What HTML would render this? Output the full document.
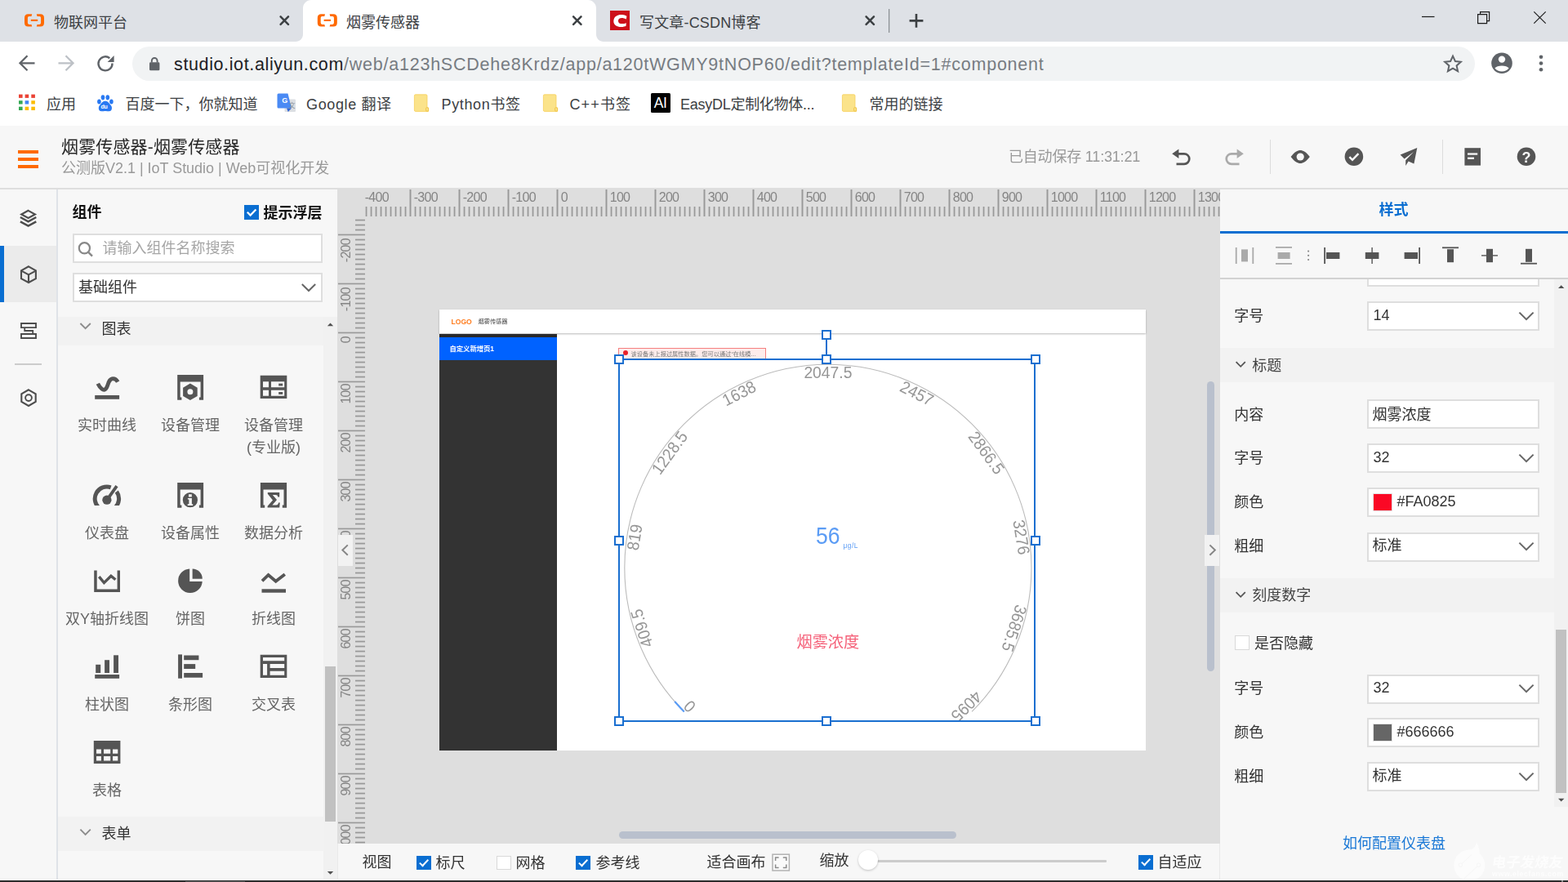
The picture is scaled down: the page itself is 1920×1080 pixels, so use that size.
<!DOCTYPE html>
<html lang="zh-CN">
<head>
<meta charset="utf-8">
<title>烟雾传感器</title>
<style>
html,body{margin:0;padding:0}
body{width:1920px;height:1080px;overflow:hidden;position:relative;background:#f7f7f7;color:#333;
  font-family:"Liberation Sans","Noto Sans CJK SC",sans-serif;font-size:18px}
.a{position:absolute;box-sizing:border-box}
.t{position:absolute;white-space:nowrap;line-height:24px;height:24px}
svg{position:absolute;overflow:visible}
.ct{color:#3c4043;font-size:18px}
.bm{color:#3c4043;font-size:18px;top:116px}
.fold{width:18px;height:22px;top:115px}
.lb{position:absolute;width:102px;text-align:center;font-size:18px;line-height:27px;color:#666;white-space:nowrap}
.rl{font-size:16px;color:#858585;line-height:16px;height:16px;letter-spacing:-0.7px}
.rv{transform-origin:0 0;transform:rotate(-90deg) translate(-100%,0)}
.gl{font-size:20.5px;fill:#969696;font-family:"Liberation Sans",sans-serif}
.hd{position:absolute;box-sizing:border-box;width:12px;height:12px;background:#fff;border:2px solid #1a6fd0}
.cb{position:absolute;box-sizing:border-box;width:17.8px;height:17.8px;background:#fff;border:1.5px solid #d9d9d9}
.cb.on{background:#0a6ed1;border:none}
.cb.on::after{content:"";position:absolute;left:5.9px;top:2.4px;width:4.4px;height:9.2px;border:solid #fff;border-width:0 2.2px 2.2px 0;transform:rotate(43deg)}
.bb{font-size:18px;color:#333}
.rlb{font-size:18px;color:#333}
.inp{position:absolute;box-sizing:border-box;left:1674px;width:211px;height:36px;background:#fff;border:2px solid #dedede}
.rv2{font-size:18px;color:#333;left:1681.6px}
.chv{left:1859px;width:20px;height:14px}
.mt{background:linear-gradient(90deg,#bdbdbd 0,#bdbdbd 1px,#999 1px,#999 2px,#bdbdbd 2px)}
.ml{background:linear-gradient(180deg,#c4c4c4 0,#c4c4c4 1px,#999 1px,#999 2px,#c9c9c9 2px)}
/*CSS-MORE*/
</style>
</head>
<body>
<!-- ================= BROWSER CHROME ================= -->
<div class="a" style="left:0;top:0;width:1920px;height:51px;background:#dee1e6"></div>
<div class="a" style="left:0;top:51px;width:1920px;height:103px;background:#fff"></div>
<!-- active tab shape -->
<svg style="left:0;top:0" width="1920" height="51" viewBox="0 0 1920 51">
  <path d="M362 51 C367 51 371 47 371 42 L371 10 C371 4.5 375.5 0 381 0 L720 0 C725.5 0 730 4.5 730 10 L730 42 C730 47 734 51 739 51 Z" fill="#fff"/>
  <!-- tab favicons -->
  <g fill="#ff6a00" transform="translate(0 0)"><path d="M39.2 17.3 H34.6 Q30 17.3 30 21.9 V27.9 Q30 32.5 34.6 32.5 H39.2 L38.5 29.9 H35.7 Q33.9 29.9 33.9 28.1 V21.7 Q33.9 19.9 35.7 19.9 H38.5 Z"/><path d="M44.8 17.3 H49.4 Q54 17.3 54 21.9 V27.9 Q54 32.5 49.4 32.5 H44.8 L45.5 29.9 H48.3 Q50.1 29.9 50.1 28.1 V21.7 Q50.1 19.9 48.3 19.9 H45.5 Z"/><rect x="37.8" y="23.8" width="8.4" height="2.1"/></g>
  <g fill="#ff6a00" transform="translate(358.8 0)"><path d="M39.2 17.3 H34.6 Q30 17.3 30 21.9 V27.9 Q30 32.5 34.6 32.5 H39.2 L38.5 29.9 H35.7 Q33.9 29.9 33.9 28.1 V21.7 Q33.9 19.9 35.7 19.9 H38.5 Z"/><path d="M44.8 17.3 H49.4 Q54 17.3 54 21.9 V27.9 Q54 32.5 49.4 32.5 H44.8 L45.5 29.9 H48.3 Q50.1 29.9 50.1 28.1 V21.7 Q50.1 19.9 48.3 19.9 H45.5 Z"/><rect x="37.8" y="23.8" width="8.4" height="2.1"/></g>
  <!-- close x -->
  <g stroke="#3c4043" stroke-width="2.5" fill="none" stroke-linecap="round">
    <path d="M343.6 20.4 L353 29.8 M353 20.4 L343.6 29.8"/>
    <path d="M702.1 20.4 L711.5 29.8 M711.5 20.4 L702.1 29.8"/>
    <path d="M1060.6 20.4 L1070 29.8 M1070 20.4 L1060.6 29.8"/>
    <path d="M1113.6 25.4 H1130.4 M1122 17 V33.8" stroke-width="2.6" stroke-linecap="butt"/>
  </g>
  <rect x="1088" y="11" width="1.3" height="29" fill="#8d9196"/>
  <!-- csdn -->
  <rect x="747" y="13" width="24" height="24" fill="#cd1019"/>
  <path d="M767.4 19.8 C762 16.6 752.4 17.2 751.4 25 C750.6 32.2 758.8 34.6 766.4 32 L766.8 28.2 C762 29.8 756.6 29.4 757 25.2 C757.4 21.2 762.4 21.2 766.8 23.4 Z" fill="#fff"/>
  <!-- window controls -->
  <g stroke="#1b1b1b" stroke-width="1.2" fill="none">
    <path d="M1741 20.5 H1756.5"/>
    <path d="M1809.6 17.6 H1820.6 V28.6 H1809.6 Z M1812.6 17.4 V14.6 H1823.6 V25.6 H1820.8"/>
    <path d="M1878.3 14.3 L1892.7 28.7 M1892.7 14.3 L1878.3 28.7"/>
  </g>
</svg>
<span class="t ct" style="left:66px;top:15.5px">物联网平台</span>
<span class="t ct" style="left:424px;top:15.5px">烟雾传感器</span>
<span class="t ct" style="letter-spacing:0.167px;left:783px;top:15.5px">写文章-CSDN博客</span>

<!-- toolbar -->
<div class="a" style="left:162px;top:57px;width:1644px;height:42px;border-radius:21px;background:#f1f3f4"></div>
<svg style="left:0;top:51px" width="1920" height="54" viewBox="0 51 1920 54">
  <g fill="none" stroke="#5f6368" stroke-width="2.3">
    <path d="M42.5 77.3 H25 M33.5 68.3 L24.5 77.3 L33.5 86.3"/>
    <path d="M71.5 77.3 H89 M80.5 68.3 L89.5 77.3 L80.5 86.3" stroke="#bdc1c6"/>
    <path d="M137.5 77.5 A8.5 8.5 0 1 1 134.3 71.2" stroke-width="2.4"/>
  </g>
  <path d="M139.6 68 V76 H131.6 Z" fill="#5f6368"/>
  <!-- lock -->
  <rect x="183" y="76.3" width="12.4" height="10" rx="1.4" fill="#5f6368"/>
  <path d="M185.8 76.5 V74.4 A3.4 3.4 0 0 1 192.6 74.4 V76.5" fill="none" stroke="#5f6368" stroke-width="1.9"/>
  <!-- star -->
  <path d="M1779 68.6 L1781.9 75 L1788.8 75.7 L1783.6 80.4 L1785.1 87.2 L1779 83.7 L1772.9 87.2 L1774.4 80.4 L1769.2 75.7 L1776.1 75 Z" fill="none" stroke="#5f6368" stroke-width="2" stroke-linejoin="miter"/>
  <!-- profile -->
  <circle cx="1839" cy="77.3" r="12.8" fill="#5f6368"/>
  <circle cx="1839" cy="72.6" r="4.2" fill="#fff"/>
  <path d="M1830.4 83.6 C1833 79.6 1845 79.6 1847.6 83.6 C1845.5 86.3 1842.5 87.6 1839 87.6 C1835.5 87.6 1832.5 86.3 1830.4 83.6 Z" fill="#fff"/>
  <!-- menu -->
  <circle cx="1887" cy="69.8" r="2.3" fill="#5f6368"/><circle cx="1887" cy="77.5" r="2.3" fill="#5f6368"/><circle cx="1887" cy="85.2" r="2.3" fill="#5f6368"/>
</svg>
<span class="t" style="letter-spacing:0.625px;left:213px;top:66.8px;font-size:21.5px;color:#202124">studio.iot.aliyun.com</span>
<span class="t" style="letter-spacing:0.768px;left:421px;top:66.8px;font-size:21.5px;color:#777c82">/web/a123hSCDehe8Krdz/app/a120tWGMY9tNOP60/edit?templateId=1#component</span>

<!-- bookmarks -->
<svg style="left:0;top:105px" width="1920" height="49" viewBox="0 105 1920 49">
  <g>
    <rect x="23" y="115.6" width="4.6" height="4.3" fill="#ea4335"/><rect x="30.6" y="115.6" width="4.6" height="4.3" fill="#ea4335"/><rect x="38.3" y="115.6" width="4.6" height="4.3" fill="#ea4335"/>
    <rect x="23" y="123.2" width="4.6" height="4.3" fill="#34a853"/><rect x="30.6" y="123.2" width="4.6" height="4.3" fill="#4285f4"/><rect x="38.3" y="123.2" width="4.6" height="4.3" fill="#fbbc05"/>
    <rect x="23" y="130.7" width="4.6" height="4.3" fill="#34a853"/><rect x="30.6" y="130.7" width="4.6" height="4.3" fill="#fbbc05"/><rect x="38.3" y="130.7" width="4.6" height="4.3" fill="#fbbc05"/>
  </g>
  <!-- baidu paw -->
  <g fill="#2979f2">
    <ellipse cx="121.4" cy="124.4" rx="2.3" ry="3"/><ellipse cx="126" cy="119.3" rx="2.3" ry="3.1"/><ellipse cx="131.8" cy="119.3" rx="2.3" ry="3.1"/><ellipse cx="136.4" cy="124.4" rx="2.3" ry="3"/>
    <path d="M128.9 123.8 C132.4 123.8 133.6 126.6 135.6 128.8 C137.8 131 137.6 136.3 133.4 136.3 C131.4 136.3 130.6 135.9 128.9 135.9 C127.2 135.9 126.4 136.3 124.4 136.3 C120.2 136.3 120 131 122.2 128.8 C124.2 126.6 125.4 123.8 128.9 123.8 Z"/>
  </g>
  <!-- google translate -->
  <rect x="348.5" y="121.5" width="13.5" height="15.5" rx="1.2" fill="#dcdfe3"/>
  <path d="M339.5 116 Q339.5 114.5 341 114.5 H352.5 L357 132.5 H341 Q339.5 132.5 339.5 131 Z" fill="#4a8af4"/>
  <path d="M351 132.5 H357 L352.8 137 Z" fill="#3367d6"/>
  <!-- folders -->
  <g fill="#fbe38a" stroke="#f6cf5a" stroke-width="0.8">
    <path d="M507.4 117.2 Q507.4 115.8 508.8 115.8 H521.6 Q523 115.8 523 117.2 V132 H524.6 V136.4 H508.8 Q507.4 136.4 507.4 135 Z"/>
    <path d="M665.4 117.2 Q665.4 115.8 666.8 115.8 H679.6 Q681 115.8 681 117.2 V132 H682.6 V136.4 H666.8 Q665.4 136.4 665.4 135 Z"/>
    <path d="M1031.4 117.2 Q1031.4 115.8 1032.8 115.8 H1045.6 Q1047 115.8 1047 117.2 V132 H1048.6 V136.4 H1032.8 Q1031.4 136.4 1031.4 135 Z"/>
  </g>
  <g fill="none" stroke="#f0c64a" stroke-width="1">
    <rect x="521.6" y="131.6" width="3" height="4.6" rx="1.2"/><rect x="679.6" y="131.6" width="3" height="4.6" rx="1.2"/><rect x="1045.6" y="131.6" width="3" height="4.6" rx="1.2"/>
  </g>
  <rect x="797" y="114" width="24" height="24" rx="1.5" fill="#000"/>
</svg>
<span class="t" style="left:345.2px;top:117px;font-size:9px;line-height:12px;height:12px;color:#fff;font-weight:bold">G</span>
<span class="t" style="left:353.5px;top:124.5px;font-size:8px;line-height:10px;height:10px;color:#8a8f96">文</span>
<span class="t" style="left:123.6px;top:127.3px;font-size:7px;line-height:8px;height:8px;color:#fff;font-weight:bold;letter-spacing:-0.3px">du</span>
<span class="t" style="left:800.8px;top:116.4px;font-size:17.5px;line-height:20px;height:20px;color:#fff;letter-spacing:-0.4px">AI</span>
<span class="t bm" style="left:57px">应用</span>
<span class="t bm" style="letter-spacing:0.000px;left:153.5px">百度一下，你就知道</span>
<span class="t bm" style="letter-spacing:0.625px;left:375px">Google 翻译</span>
<span class="t bm" style="letter-spacing:0.643px;left:540.5px">Python书签</span>
<span class="t bm" style="letter-spacing:1.125px;left:697.5px">C++书签</span>
<span class="t bm" style="letter-spacing:-0.269px;left:833px">EasyDL定制化物体...</span>
<span class="t bm" style="left:1064.5px">常用的链接</span>

<div class="a" id="app" style="left:0;top:0;width:1920px;height:1080px;will-change:transform">
<!-- ================= APP HEADER ================= -->
<div class="a" style="left:0;top:154px;width:1920px;height:76px;background:#f7f7f7"></div>
<div class="a" style="left:0;top:229.5px;width:1920px;height:2px;background:#dedede;z-index:5"></div>
<div class="a" style="left:22px;top:184px;width:25px;height:4px;background:#ff6a00"></div>
<div class="a" style="left:22px;top:193px;width:25px;height:4px;background:#ff6a00"></div>
<div class="a" style="left:22px;top:202px;width:25px;height:4px;background:#ff6a00"></div>
<span class="t" style="letter-spacing:0.150px;left:75px;top:167.5px;font-size:21px;color:#262626">烟雾传感器-烟雾传感器</span>
<span class="t" style="letter-spacing:-0.017px;left:75px;top:194px;font-size:18px;color:#999">公测版V2.1 | IoT Studio | Web可视化开发</span>
<span class="t" style="letter-spacing:-0.192px;left:1235px;top:180.1px;font-size:18px;color:#999">已自动保存 11:31:21</span>
<div class="a" style="left:1554.5px;top:171px;width:1.5px;height:42px;background:#dcdcdc"></div>
<div class="a" style="left:1765.7px;top:171px;width:1.5px;height:42px;background:#dcdcdc"></div>
<svg style="left:1420px;top:160px" width="500" height="64" viewBox="1420 160 500 64">
  <!-- undo -->
  <g fill="none" stroke="#555" stroke-width="2.7">
    <path d="M1438.5 188.3 H1450 A6.3 6.3 0 0 1 1450 200.9 H1440.5"/>
  </g>
  <path d="M1435.2 188.3 L1443.4 182.6 V194 Z" fill="#555"/>
  <!-- redo -->
  <g fill="none" stroke="#aaa" stroke-width="2.7">
    <path d="M1519.5 188.3 H1508 A6.3 6.3 0 0 0 1508 200.9 H1517.5"/>
  </g>
  <path d="M1522.8 188.3 L1514.6 182.6 V194 Z" fill="#aaa"/>
  <!-- eye -->
  <path d="M1580.6 192 C1585 186 1589 184 1592.2 184 C1595.4 184 1599.4 186 1603.8 192 C1599.4 198 1595.4 200 1592.2 200 C1589 200 1585 198 1580.6 192 Z" fill="#555"/>
  <circle cx="1592.2" cy="192" r="4.6" fill="#f7f7f7"/>
  <!-- check circle -->
  <circle cx="1657.9" cy="191.8" r="11.3" fill="#555"/>
  <path d="M1652.4 192.2 L1656 195.8 L1663.4 188.2" fill="none" stroke="#f7f7f7" stroke-width="2.5"/>
  <!-- send -->
  <path d="M1714.6 189.6 L1735.3 181 L1731.4 200.6 L1724.6 197.6 L1721.2 203 L1721.2 196.2 L1731 186 L1719.6 194.6 Z" fill="#555"/>
  <!-- doc -->
  <rect x="1793.4" y="181.2" width="19.6" height="21.4" fill="#555"/>
  <rect x="1797" y="187.4" width="12.2" height="2.3" fill="#f7f7f7"/>
  <rect x="1797" y="192.6" width="8" height="2.3" fill="#f7f7f7"/>
  <!-- help -->
  <circle cx="1869" cy="191.8" r="11.3" fill="#555"/>
</svg>
<span class="t" style="left:1863.6px;top:180.5px;font-size:18px;font-weight:bold;color:#f7f7f7;line-height:24px">?</span>

<!-- ================= LEFT ICON BAR ================= -->
<div class="a" style="left:0;top:231.5px;width:70px;height:846px;background:#f7f7f7"></div>
<div class="a" style="left:69px;top:231.5px;width:2px;height:846px;background:#dfe3e8"></div>
<div class="a" style="left:0;top:301px;width:69px;height:69px;background:#ebebeb"></div>
<div class="a" style="left:0;top:301px;width:5px;height:69px;background:#0a6ed1"></div>
<div class="a" style="left:18px;top:445px;width:33px;height:1.5px;background:#ccc"></div>
<svg style="left:0;top:240px" width="70" height="270" viewBox="0 240 70 270">
  <g fill="none" stroke="#4d4d4d" stroke-width="2.1" stroke-linejoin="miter">
    <!-- layers -->
    <path d="M34.6 257.8 L43 262.5 L34.6 267 L26.2 262.5 Z"/>
    <path d="M24.9 266 L34.6 271.3 L44.3 266" stroke-width="2.5"/>
    <path d="M24.9 271.3 L34.6 276.6 L44.3 271.3" stroke-width="2.5"/>
    <!-- cube -->
    <path d="M35 326.3 L43.9 331.4 V341.1 L35 346 L26 341.1 V331.4 Z"/>
    <path d="M26.2 331.6 L35 336.4 L43.8 331.6 M35 336.4 V345.8"/>
    <!-- layout -->
    <path d="M26 396 H44 V401.1 H26 Z M26 409 H44 V414 H26 Z" stroke-width="1.9"/>
    <path d="M30.2 401.6 V405 H40.2 V408.4" stroke-width="1.8"/>
    <!-- hexagon setting -->
    <path d="M35 477.3 L43.7 482.3 V492 L35 497 L26.3 492 V482.3 Z"/>
    <circle cx="35" cy="487.1" r="3.9" stroke-width="1.9"/>
  </g>
</svg>

<!-- ================= COMPONENT PANEL ================= -->
<div class="a" style="left:71px;top:231.5px;width:342px;height:846px;background:#f7f7f7"></div>
<span class="t" style="left:88.5px;top:248px;font-size:18px;font-weight:bold;color:#111">组件</span>
<div class="a" style="left:299px;top:251px;width:18px;height:18px;background:#0a6ed1"></div>
<svg style="left:299px;top:251px" width="18" height="18" viewBox="0 0 18 18"><path d="M3.8 8.8 L7.6 12.6 L14.4 5.4" fill="none" stroke="#fff" stroke-width="2.2"/></svg>
<span class="t" style="left:322.5px;top:248.7px;font-size:18px;font-weight:bold;color:#111">提示浮层</span>
<div class="a" style="left:89px;top:286px;width:306px;height:36px;background:#fff;border:2px solid #dedede"></div>
<svg style="left:94px;top:294px" width="22" height="22" viewBox="94 294 22 22"><circle cx="103.4" cy="303.8" r="6.6" fill="none" stroke="#888" stroke-width="2.2"/><path d="M108.2 308.8 L113 313.6" stroke="#888" stroke-width="2.4" fill="none"/></svg>
<span class="t" style="left:125.5px;top:291.5px;font-size:18px;color:#a6a6a6">请输入组件名称搜索</span>
<div class="a" style="left:89px;top:334px;width:306px;height:36px;background:#fff;border:2px solid #dedede"></div>
<span class="t" style="left:96px;top:340.3px;font-size:18px;color:#333">基础组件</span>
<svg style="left:366px;top:344px" width="24" height="16" viewBox="366 344 24 16"><path d="M369.8 348 L378 356 L386.2 348" fill="none" stroke="#666" stroke-width="2"/></svg>
<!-- section header + scrollbar track -->
<div class="a" style="left:71px;top:388px;width:342px;height:35px;background:#f2f2f2"></div>
<div class="a" style="left:396px;top:388px;width:17px;height:689px;background:#f1f1f1"></div>
<div class="a" style="left:398px;top:816px;width:13px;height:190px;background:#c1c1c1"></div>
<svg style="left:396px;top:388px" width="17" height="690" viewBox="396 388 17 690">
  <path d="M400.8 399.2 L404.5 395.4 L408.2 399.2 Z" fill="#505050"/>
  <path d="M400.8 1067 L404.5 1070.8 L408.2 1067 Z" fill="#505050"/>
</svg>
<svg style="left:96px;top:392px" width="18" height="14" viewBox="96 392 18 14"><path d="M98.4 396 L104.6 402.2 L110.8 396" fill="none" stroke="#8c8c8c" stroke-width="1.9"/></svg>
<span class="t" style="left:124.5px;top:390.5px;font-size:18px;color:#333">图表</span>
<div class="a" style="left:71px;top:1000px;width:325.5px;height:42px;background:#f2f2f2"></div>
<svg style="left:96px;top:1011px" width="18" height="14" viewBox="96 1011 18 14"><path d="M98.4 1015.6 L104.6 1021.8 L110.8 1015.6" fill="none" stroke="#8c8c8c" stroke-width="1.9"/></svg>
<span class="t" style="left:124.5px;top:1009.1px;font-size:18px;color:#333">表单</span>
<!-- labels -->
<div class="lb" style="left:80px;top:507.7px">实时曲线</div>
<div class="lb" style="left:182px;top:507.7px">设备管理</div>
<div class="lb" style="left:284px;top:507.7px">设备管理<br>(专业版)</div>
<div class="lb" style="left:80px;top:640.2px">仪表盘</div>
<div class="lb" style="left:182px;top:640.2px">设备属性</div>
<div class="lb" style="left:284px;top:640.2px">数据分析</div>
<div class="lb" style="left:70px;width:122px;top:745.2px">双Y轴折线图</div>
<div class="lb" style="left:182px;top:745.2px">饼图</div>
<div class="lb" style="left:284px;top:745.2px">折线图</div>
<div class="lb" style="left:80px;top:849.7px">柱状图</div>
<div class="lb" style="left:182px;top:849.7px">条形图</div>
<div class="lb" style="left:284px;top:849.7px">交叉表</div>
<div class="lb" style="left:80px;top:954.7px">表格</div>
<!--ICONS-START-->
<svg style="left:71px;top:440px" width="326" height="510" viewBox="71 440 326 510">
<g fill="#555">
  <!-- 1 realtime curve -->
  <rect x="116.2" y="484" width="29.9" height="4.8"/>
  <path d="M119.8 469.8 C122.8 475.8 126.4 478.6 129 476.6 C133 473.6 131.8 463.8 138.4 463.6 C141 463.6 142.8 465 144.2 467.6" fill="none" stroke="#555" stroke-width="4.8"/>
  <!-- 2 device manage -->
  <path d="M217.2 459.1 H249.1 V489.8 H243.9 V486.4 H245.6 V467.6 H220.7 V486.4 H222.4 V489.8 H217.2 Z"/>
  <path d="M232.9 469.6 L241.7 474.7 V484.9 L232.9 490 L224.1 484.9 V474.7 Z M232.9 476.3 A3.5 3.5 0 1 0 232.9 483.3 A3.5 3.5 0 1 0 232.9 476.3 Z" fill-rule="evenodd"/>
  <!-- 3 device manage pro -->
  <path d="M318.7 459.8 H351.3 V488 H318.7 Z M322 467.3 V474.2 H329 V467.3 Z M332 467.3 V474.2 H348.2 V467.3 Z M322 477.8 V484.7 H329 V477.8 Z M332 477.8 V484.7 H348.2 V477.8 Z" fill-rule="evenodd"/>
  <rect x="341.2" y="469.6" width="5" height="2.9"/><rect x="341.2" y="480" width="5" height="2.9"/>
  <!-- 4 gauge -->
    <svg x="110" y="590" width="42" height="28.9" viewBox="110 590 42 28.9" style="overflow:hidden;position:static"><path d="M121.45 621.96 A14.7 14.7 0 0 1 135.69 596.80" fill="none" stroke="#555" stroke-width="5"/>
  <path d="M142.79 602.06 A14.7 14.7 0 0 1 140.35 621.96" fill="none" stroke="#555" stroke-width="5"/></svg>
  <circle cx="130.9" cy="612.2" r="5.6"/>
  <path d="M131 612.2 L143 595.2" fill="none" stroke="#555" stroke-width="3.8"/>
  <!-- 5 device attr -->
  <path d="M217.2 591.1 H249.1 V621.8 H243.9 V618.4 H245.6 V599.6 H220.7 V618.4 H222.4 V621.8 H217.2 Z"/>
  <path d="M232.9 603.1 A9.1 9.1 0 1 0 232.9 621.3 A9.1 9.1 0 1 0 232.9 603.1 Z M231 605.3 H234.8 V608.5 H231 Z M229.9 609.9 H234.9 V617.3 H236.2 V618.9 H229.7 V617.3 H231.4 V611.5 H229.9 Z" fill-rule="evenodd"/>
  <!-- 6 data analysis -->
  <path d="M318.9 591.1 H351.1 V621.8 H345.8 V618.4 H347.5 V599.6 H322.5 V618.4 H324.2 V621.8 H318.9 Z"/>
  <path d="M327.8 603.1 H342.2 V608.6 H340.2 C340 606.8 339.2 606.1 337.4 606.1 H333.8 L339 612 L333.4 618.4 H338 C340 618.4 340.6 617.6 341 615.6 H342.8 L342.2 621.4 H327.6 V619.8 L334 612.4 L327.8 604.8 Z"/>
  <!-- 7 dual-Y line -->
  <path d="M115.2 698.5 H118.7 V721.6 H143.6 V698.5 H147 V724.9 H115.2 Z"/>
  <path d="M121.3 706.2 L127.4 713.6 L135.9 705.2 L141.4 709.8" fill="none" stroke="#555" stroke-width="3.4"/>
  <!-- 8 pie -->
  <path d="M232.2 696.4 V711.9 H247.7 A14.8 14.8 0 1 1 232.2 696.4 Z"/>
  <path d="M235.6 696.4 A12.4 12.4 0 0 1 247.8 708.8 H235.6 Z"/>
  <!-- 9 line -->
  <rect x="320.5" y="721.3" width="29.5" height="4.4"/>
  <path d="M321 711.4 L328.6 704 L337.7 711.8 L348.8 703.2" fill="none" stroke="#555" stroke-width="3.8"/>
  <!-- 10 bar -->
  <rect x="117.2" y="813.8" width="6" height="10.2"/><rect x="128.1" y="808.2" width="5.9" height="15.8"/><rect x="139.1" y="802.3" width="5.9" height="21.7"/>
  <rect x="116.2" y="826" width="29.9" height="4.8"/>
  <!-- 11 horizontal bar -->
  <rect x="218.1" y="801.4" width="4.9" height="29.3"/>
  <rect x="225.2" y="802.5" width="18.2" height="5.7"/><rect x="225.2" y="813.1" width="14" height="5.9"/><rect x="225.2" y="824" width="22.9" height="5.7"/>
  <!-- 12 cross table -->
  <path d="M318.7 801.8 H351.3 V830 H318.7 Z M322 805 V809.2 H348.2 V805 Z M322 813.1 V826.7 H327.1 V813.1 Z M330.6 813.1 V818 H348.2 V813.1 Z M330.6 821.8 V826.7 H348.2 V821.8 Z" fill-rule="evenodd"/>
  <!-- 13 table -->
  <path d="M114.8 907 H147.4 V935 H114.8 Z M118 917.5 V922.7 H123.9 V917.5 Z M127 917.5 V922.7 H135.2 V917.5 Z M138 917.5 V922.7 H144.3 V917.5 Z M118 926 V931.4 H123.9 V926 Z M127 926 V931.4 H135.2 V926 Z M138 926 V931.4 H144.3 V926 Z" fill-rule="evenodd"/>
</g>
</svg>

<!--ICONS-END-->

<!--RULER-START-->
<!-- ================= CANVAS ================= -->
<div class="a" style="left:413px;top:231px;width:1081px;height:802.5px;background:#dedede;overflow:hidden">
<div class="a" style="left:34px;top:22px;width:1047px;height:12px;background:linear-gradient(90deg,#c6c6c6 0,#c6c6c6 1px,#999 1px,#999 2px,#c0c0c0 2px,#c0c0c0 3px,transparent 3px) 0 0/6px 100%"></div>
<div class="a" style="left:22px;top:37px;width:12px;height:770px;background:linear-gradient(180deg,#c6c6c6 0,#c6c6c6 1px,#999 1px,#999 2px,#c0c0c0 2px,#c0c0c0 3px,transparent 3px) 0 0/100% 6px"></div>
<div class="a mt" style="left:88px;top:1px;width:3px;height:33px"></div>
<div class="a mt" style="left:148px;top:1px;width:3px;height:33px"></div>
<div class="a mt" style="left:208px;top:1px;width:3px;height:33px"></div>
<div class="a mt" style="left:268px;top:1px;width:3px;height:33px"></div>
<div class="a mt" style="left:328px;top:1px;width:3px;height:33px"></div>
<div class="a mt" style="left:388px;top:1px;width:3px;height:33px"></div>
<div class="a mt" style="left:448px;top:1px;width:3px;height:33px"></div>
<div class="a mt" style="left:508px;top:1px;width:3px;height:33px"></div>
<div class="a mt" style="left:568px;top:1px;width:3px;height:33px"></div>
<div class="a mt" style="left:628px;top:1px;width:3px;height:33px"></div>
<div class="a mt" style="left:688px;top:1px;width:3px;height:33px"></div>
<div class="a mt" style="left:748px;top:1px;width:3px;height:33px"></div>
<div class="a mt" style="left:808px;top:1px;width:3px;height:33px"></div>
<div class="a mt" style="left:868px;top:1px;width:3px;height:33px"></div>
<div class="a mt" style="left:928px;top:1px;width:3px;height:33px"></div>
<div class="a mt" style="left:988px;top:1px;width:3px;height:33px"></div>
<div class="a mt" style="left:1048px;top:1px;width:3px;height:33px"></div>
<span class="t rl" style="left:33.7px;top:2.6px">-400</span>
<span class="t rl" style="left:93.7px;top:2.6px">-300</span>
<span class="t rl" style="left:153.7px;top:2.6px">-200</span>
<span class="t rl" style="left:213.7px;top:2.6px">-100</span>
<span class="t rl" style="left:273.7px;top:2.6px">0</span>
<span class="t rl" style="left:333.7px;top:2.6px">100</span>
<span class="t rl" style="left:393.7px;top:2.6px">200</span>
<span class="t rl" style="left:453.7px;top:2.6px">300</span>
<span class="t rl" style="left:513.7px;top:2.6px">400</span>
<span class="t rl" style="left:573.7px;top:2.6px">500</span>
<span class="t rl" style="left:633.7px;top:2.6px">600</span>
<span class="t rl" style="left:693.7px;top:2.6px">700</span>
<span class="t rl" style="left:753.7px;top:2.6px">800</span>
<span class="t rl" style="left:813.7px;top:2.6px">900</span>
<span class="t rl" style="left:873.7px;top:2.6px">1000</span>
<span class="t rl" style="left:933.7px;top:2.6px">1100</span>
<span class="t rl" style="left:993.7px;top:2.6px">1200</span>
<span class="t rl" style="left:1053.7px;top:2.6px">1300</span>
<div class="a ml" style="left:1px;top:55px;width:33px;height:3px"></div>
<span class="t rl rv" style="left:2.8px;top:61px">-200</span>
<div class="a ml" style="left:1px;top:115px;width:33px;height:3px"></div>
<span class="t rl rv" style="left:2.8px;top:121px">-100</span>
<div class="a ml" style="left:1px;top:175px;width:33px;height:3px"></div>
<span class="t rl rv" style="left:2.8px;top:181px">0</span>
<div class="a ml" style="left:1px;top:235px;width:33px;height:3px"></div>
<span class="t rl rv" style="left:2.8px;top:238.6px">100</span>
<div class="a ml" style="left:1px;top:295px;width:33px;height:3px"></div>
<span class="t rl rv" style="left:2.8px;top:298.6px">200</span>
<div class="a ml" style="left:1px;top:355px;width:33px;height:3px"></div>
<span class="t rl rv" style="left:2.8px;top:358.6px">300</span>
<div class="a ml" style="left:1px;top:415px;width:33px;height:3px"></div>
<span class="t rl rv" style="left:2.8px;top:418.6px">400</span>
<div class="a ml" style="left:1px;top:475px;width:33px;height:3px"></div>
<span class="t rl rv" style="left:2.8px;top:478.6px">500</span>
<div class="a ml" style="left:1px;top:535px;width:33px;height:3px"></div>
<span class="t rl rv" style="left:2.8px;top:538.6px">600</span>
<div class="a ml" style="left:1px;top:595px;width:33px;height:3px"></div>
<span class="t rl rv" style="left:2.8px;top:598.6px">700</span>
<div class="a ml" style="left:1px;top:655px;width:33px;height:3px"></div>
<span class="t rl rv" style="left:2.8px;top:658.6px">800</span>
<div class="a ml" style="left:1px;top:715px;width:33px;height:3px"></div>
<span class="t rl rv" style="left:2.8px;top:718.6px">900</span>
<div class="a ml" style="left:1px;top:775px;width:33px;height:3px"></div>
<span class="t rl rv" style="left:2.8px;top:778.6px">1000</span>
</div>
<!--RULER-END-->
<!-- page -->
<div class="a" style="left:538px;top:379px;width:865px;height:540px;background:#fff"></div>
<div class="a" style="left:538px;top:379px;width:865px;height:29px;background:#fff;box-shadow:0 1px 2px rgba(0,0,0,.28)"></div>
<div class="a" style="left:538px;top:408.5px;width:144.3px;height:510.5px;background:#333"></div>
<div class="a" style="left:538px;top:408.5px;width:144.3px;height:4px;background:#2a2a2a"></div>
<div class="a" style="left:538px;top:412.5px;width:144.3px;height:28.7px;background:#0062ff"></div>
<span class="t" style="letter-spacing:0.000px;left:552.5px;top:387.5px;font-size:8.6px;line-height:12px;height:12px;font-weight:bold;color:#ff7d1f">LOGO</span>
<span class="t" style="left:585.5px;top:387.5px;font-size:7.2px;line-height:12px;height:12px;color:#444">烟雾传感器</span>
<span class="t" style="letter-spacing:-0.083px;left:550.5px;top:421px;font-size:8.4px;line-height:12px;height:12px;font-weight:bold;color:#fff">自定义新增页1</span>
<!-- alert -->
<div class="a" style="left:757.3px;top:426.4px;width:181px;height:13.6px;background:#fdeceb;border:1.3px solid #f57f7f"></div>
<div class="a" style="left:762.6px;top:428.8px;width:6.4px;height:6.4px;border-radius:50%;background:#e8202a"></div>
<span class="t" style="letter-spacing:0.043px;left:772.5px;top:427.5px;font-size:7.2px;line-height:12px;height:12px;color:#777">该设备未上报过属性数据。您可以通过“在线模...</span>
<!--GAUGE-START-->
<svg style="left:740px;top:400px" width="560" height="500" viewBox="740 400 560 500">
<path d="M837.76 871.44 A249.10 249.10 0 1 1 1190.04 871.44" fill="none" stroke="#bbb" stroke-width="1.1"/>
<path d="M837.76 871.44 A249.10 249.10 0 0 1 826.19 859.05" fill="none" stroke="#5b9cf5" stroke-width="2.2"/>
<text x="844.05" y="865.15" transform="rotate(-135 844.05 865.15)" text-anchor="middle" dominant-baseline="central" textLength="10.7" lengthAdjust="spacingAndGlyphs" class="gl">0</text>
<text x="785.46" y="769.53" transform="rotate(-108 785.46 769.53)" text-anchor="middle" dominant-baseline="central" textLength="48" lengthAdjust="spacingAndGlyphs" class="gl">409.5</text>
<text x="776.66" y="657.72" transform="rotate(-81 776.66 657.72)" text-anchor="middle" dominant-baseline="central" textLength="32" lengthAdjust="spacingAndGlyphs" class="gl">819</text>
<text x="819.57" y="554.11" transform="rotate(-54 819.57 554.11)" text-anchor="middle" dominant-baseline="central" textLength="59" lengthAdjust="spacingAndGlyphs" class="gl">1228.5</text>
<text x="904.85" y="481.28" transform="rotate(-27 904.85 481.28)" text-anchor="middle" dominant-baseline="central" textLength="43" lengthAdjust="spacingAndGlyphs" class="gl">1638</text>
<text x="1013.90" y="455.10" transform="rotate(0 1013.90 455.10)" text-anchor="middle" dominant-baseline="central" textLength="59" lengthAdjust="spacingAndGlyphs" class="gl">2047.5</text>
<text x="1122.95" y="481.28" transform="rotate(27 1122.95 481.28)" text-anchor="middle" dominant-baseline="central" textLength="43" lengthAdjust="spacingAndGlyphs" class="gl">2457</text>
<text x="1208.23" y="554.11" transform="rotate(54 1208.23 554.11)" text-anchor="middle" dominant-baseline="central" textLength="59" lengthAdjust="spacingAndGlyphs" class="gl">2866.5</text>
<text x="1251.14" y="657.72" transform="rotate(81 1251.14 657.72)" text-anchor="middle" dominant-baseline="central" textLength="43" lengthAdjust="spacingAndGlyphs" class="gl">3276</text>
<text x="1242.34" y="769.53" transform="rotate(108 1242.34 769.53)" text-anchor="middle" dominant-baseline="central" textLength="59" lengthAdjust="spacingAndGlyphs" class="gl">3685.5</text>
<text x="1183.75" y="865.15" transform="rotate(135 1183.75 865.15)" text-anchor="middle" dominant-baseline="central" textLength="43" lengthAdjust="spacingAndGlyphs" class="gl">4095</text>
</svg>
<!--GAUGE-END-->
<span class="t" style="left:999px;top:639.9px;font-size:29.5px;line-height:32px;height:32px;color:#5b9cf5;transform-origin:0 0;transform:scaleX(0.9)">56</span>
<span class="t" style="letter-spacing:0.500px;left:1032.5px;top:662px;font-size:8.4px;line-height:12px;height:12px;color:#5b9cf5">μg/L</span>
<span class="t" style="left:975.5px;top:774px;font-size:19.2px;line-height:26px;height:26px;color:#f5627a">烟雾浓度</span>
<!-- selection -->
<div class="a" style="left:756.6px;top:438.8px;width:511.6px;height:444.8px;border:2px solid #1a6fd0"></div>
<div class="a" style="left:1011px;top:414px;width:2px;height:22px;background:#1a6fd0"></div>
<div class="hd" style="left:1006px;top:404px"></div>
<div class="hd" style="left:751.5px;top:434px"></div>
<div class="hd" style="left:1006px;top:434px"></div>
<div class="hd" style="left:1261.5px;top:434px"></div>
<div class="hd" style="left:751.5px;top:655.6px"></div>
<div class="hd" style="left:1261.5px;top:655.6px"></div>
<div class="hd" style="left:751.5px;top:877px"></div>
<div class="hd" style="left:1006px;top:877px"></div>
<div class="hd" style="left:1261.5px;top:877px"></div>
<!-- canvas scrollbars -->
<div class="a" style="left:1477.7px;top:466.5px;width:9px;height:355px;border-radius:4.5px;background:#b9c0cd"></div>
<div class="a" style="left:758px;top:1017.5px;width:412.7px;height:9px;border-radius:4.5px;background:#b9c0cd"></div>
<!-- collapse handles -->
<div class="a" style="left:414px;top:655px;width:18px;height:38px;background:#f2f2f2"></div>
<div class="a" style="left:1475px;top:655px;width:18px;height:38px;background:#f2f2f2"></div>
<svg style="left:414px;top:655px" width="1080" height="38" viewBox="414 655 1080 38">
  <path d="M425.8 667.4 L419.4 673.6 L425.8 679.8" fill="none" stroke="#858585" stroke-width="2"/>
  <path d="M1481.4 667.4 L1487.8 673.6 L1481.4 679.8" fill="none" stroke="#858585" stroke-width="2"/>
</svg>
<!-- bottom bar -->
<div class="a" style="left:413px;top:1033.3px;width:1081px;height:44px;background:#f7f7f7"></div>
<div class="a" style="left:413px;top:1033.3px;width:1px;height:44px;background:#e9e9e9"></div>
<div class="a" style="left:1493px;top:1033.3px;width:1px;height:44px;background:#e9e9e9"></div>
<span class="t bb" style="left:443.4px;top:1044.3px">视图</span>
<div class="cb on" style="left:510px;top:1047.5px"></div>
<span class="t bb" style="left:533.5px;top:1045.4px">标尺</span>
<div class="cb" style="left:608.3px;top:1047.5px"></div>
<span class="t bb" style="left:631.5px;top:1045.4px">网格</span>
<div class="cb on" style="left:705px;top:1047.5px"></div>
<span class="t bb" style="left:729.5px;top:1045.4px">参考线</span>
<span class="t bb" style="left:865.5px;top:1043.7px">适合画布</span>
<svg style="left:944px;top:1044px" width="24" height="24" viewBox="944 1044 24 24">
  <rect x="946" y="1046.2" width="20.4" height="19.8" fill="#fafafa" stroke="#b2b2b2" stroke-width="1.5"/>
  <path d="M949.6 1054 V1050 H953.6 M958.8 1050 H962.8 V1054 M962.8 1058.4 V1062.4 H958.8 M953.6 1062.4 H949.6 V1058.4" fill="none" stroke="#8c8c8c" stroke-width="1.5"/>
</svg>
<span class="t bb" style="left:1003.5px;top:1041.5px">缩放</span>
<div class="a" style="left:1070px;top:1053px;width:285px;height:2.5px;background:#ccc;border-radius:1px"></div>
<div class="a" style="left:1051px;top:1041.3px;width:24px;height:24px;border-radius:50%;background:#fff;box-shadow:0 1px 3px rgba(0,0,0,.22)"></div>
<div class="cb on" style="left:1394px;top:1047px"></div>
<span class="t bb" style="left:1417.5px;top:1043.5px">自适应</span>

<!-- ================= RIGHT PANEL ================= -->
<div class="a" style="left:1494px;top:231.5px;width:426px;height:846px;background:#f7f7f7"></div>
<span class="t" style="left:1688.5px;top:245px;font-size:18px;font-weight:bold;color:#0a6ed1">样式</span>
<div class="a" style="left:1494px;top:283px;width:426px;height:3px;background:#0a6ed1"></div>
<div class="a" style="left:1494px;top:340.4px;width:426px;height:1.6px;background:#d2d2d2"></div>
<svg style="left:1500px;top:296px" width="400" height="34" viewBox="1500 296 400 34">
  <g fill="#aaa">
    <rect x="1512.8" y="303" width="1.8" height="20"/><rect x="1533.4" y="303" width="1.8" height="20"/><rect x="1520" y="305.4" width="8" height="15"/>
    <rect x="1562" y="302" width="20" height="1.8"/><rect x="1562" y="322" width="20" height="1.8"/><rect x="1564.6" y="309" width="15" height="8"/>
  </g>
  <g fill="#888"><circle cx="1602.1" cy="307.6" r="1.1"/><circle cx="1602.1" cy="312.8" r="1.1"/><circle cx="1602.1" cy="318" r="1.1"/></g>
  <g fill="#555">
    <rect x="1621.2" y="303" width="1.8" height="20"/><rect x="1624" y="309" width="16.4" height="8"/>
    <rect x="1679.4" y="303" width="1.4" height="20"/><rect x="1671.8" y="309" width="16.6" height="8"/>
    <rect x="1737.2" y="303" width="1.8" height="20"/><rect x="1719.6" y="309" width="16.4" height="8"/>
    <rect x="1766" y="302.4" width="20" height="1.8"/><rect x="1772" y="305.2" width="8" height="16"/>
    <rect x="1814" y="312.2" width="20" height="1.4"/><rect x="1820" y="304.8" width="8" height="16.4"/>
    <rect x="1862" y="321.8" width="20" height="1.8"/><rect x="1868" y="304.8" width="8" height="16"/>
  </g>
</svg>
<!-- scrollbar -->
<div class="a" style="left:1903px;top:342px;width:17px;height:646px;background:#f1f1f1"></div>
<div class="a" style="left:1905px;top:771px;width:12.5px;height:200px;background:#c1c1c1"></div>
<svg style="left:1903px;top:342px" width="17" height="646" viewBox="1903 342 17 646">
  <path d="M1908 353 L1911.7 349.2 L1915.4 353 Z" fill="#505050"/>
  <path d="M1908 977.8 L1911.7 981.6 L1915.4 977.8 Z" fill="#505050"/>
</svg>
<!-- partial input at top -->
<div class="a" style="left:1674px;top:330px;width:211px;height:21px;background:#fff;border:2px solid #dedede;clip-path:inset(12px 0 0 0)"></div>
<!-- row: 字号 14 -->
<span class="t rlb" style="left:1511.3px;top:375.1px">字号</span>
<div class="inp" style="top:369.4px"></div>
<span class="t rv2" style="top:374.2px">14</span>
<svg class="chv" style="top:380px" viewBox="0 0 20 14"><path d="M1.4 2.6 L10 11.2 L18.6 2.6" fill="none" stroke="#666" stroke-width="2"/></svg>
<!-- section 标题 -->
<div class="a" style="left:1494px;top:426px;width:409px;height:42px;background:#f2f2f2"></div>
<svg style="left:1511px;top:440px" width="16" height="12" viewBox="1511 440 16 12"><path d="M1513.6 443.2 L1519.2 448.8 L1524.8 443.2" fill="none" stroke="#555" stroke-width="1.8"/></svg>
<span class="t rlb" style="left:1533.3px;top:435.6px;color:#444">标题</span>
<span class="t rlb" style="left:1511.3px;top:495.6px">内容</span>
<div class="inp" style="top:489.3px"></div>
<span class="t rv2" style="top:496.1px;left:1680.5px">烟雾浓度</span>
<span class="t rlb" style="left:1511.3px;top:548.9px">字号</span>
<div class="inp" style="top:543.3px"></div>
<span class="t rv2" style="top:548.2px">32</span>
<svg class="chv" style="top:554px" viewBox="0 0 20 14"><path d="M1.4 2.6 L10 11.2 L18.6 2.6" fill="none" stroke="#666" stroke-width="2"/></svg>
<span class="t rlb" style="left:1511.3px;top:603.4px">颜色</span>
<div class="inp" style="top:597.3px"></div>
<div class="a" style="left:1681.2px;top:603.5px;width:23.4px;height:22.6px;background:#fa0825;border:1px solid #e4e4e4"></div>
<span class="t rv2" style="letter-spacing:0.000px;top:602.2px;left:1710.5px">#FA0825</span>
<span class="t rlb" style="left:1511.3px;top:657.2px">粗细</span>
<div class="inp" style="top:651.7px"></div>
<span class="t rv2" style="top:656.1px;left:1680.5px">标准</span>
<svg class="chv" style="top:662.4px" viewBox="0 0 20 14"><path d="M1.4 2.6 L10 11.2 L18.6 2.6" fill="none" stroke="#666" stroke-width="2"/></svg>
<!-- section 刻度数字 -->
<div class="a" style="left:1494px;top:708.3px;width:409px;height:42px;background:#f2f2f2"></div>
<svg style="left:1511px;top:722px" width="16" height="12" viewBox="1511 722 16 12"><path d="M1513.6 725.2 L1519.2 730.8 L1524.8 725.2" fill="none" stroke="#555" stroke-width="1.8"/></svg>
<span class="t rlb" style="left:1533.3px;top:717.4px;color:#444">刻度数字</span>
<div class="cb" style="left:1512.2px;top:778.3px"></div>
<span class="t rlb" style="left:1536px;top:775.9px">是否隐藏</span>
<span class="t rlb" style="left:1511.3px;top:830.6px">字号</span>
<div class="inp" style="top:825.5px"></div>
<span class="t rv2" style="top:830.2px">32</span>
<svg class="chv" style="top:836px" viewBox="0 0 20 14"><path d="M1.4 2.6 L10 11.2 L18.6 2.6" fill="none" stroke="#666" stroke-width="2"/></svg>
<span class="t rlb" style="left:1511.3px;top:884.9px">颜色</span>
<div class="inp" style="top:879.3px"></div>
<div class="a" style="left:1681.2px;top:885.5px;width:23.4px;height:22.6px;background:#666;border:1px solid #e4e4e4"></div>
<span class="t rv2" style="letter-spacing:0.000px;top:884.2px;left:1710.5px">#666666</span>
<span class="t rlb" style="left:1511.3px;top:938.9px">粗细</span>
<div class="inp" style="top:933.3px"></div>
<span class="t rv2" style="top:938.1px;left:1680.5px">标准</span>
<svg class="chv" style="top:944px" viewBox="0 0 20 14"><path d="M1.4 2.6 L10 11.2 L18.6 2.6" fill="none" stroke="#666" stroke-width="2"/></svg>
<span class="t" style="left:1644px;top:1021.4px;font-size:18px;color:#1a78d6">如何配置仪表盘</span>
<!-- watermark -->
<span class="t" style="left:1827px;top:1044px;font-size:17.4px;font-weight:bold;color:#fdfdfd;line-height:24px;height:24px;transform:skewX(-9deg)">电子发烧友</span>
<span class="t" style="letter-spacing:0.600px;left:1827px;top:1064.6px;font-size:8.8px;font-weight:bold;color:#fdfdfd;line-height:11px;height:11px">www.elecfans.com</span>
<svg style="left:1776px;top:1028px" width="48" height="49" viewBox="1776 1028 48 49">
  <circle cx="1799.3" cy="1059.5" r="19" fill="#fcfcfc"/>
  <path d="M1807.8 1031 C1807.4 1039 1801 1041.4 1791 1043.4 L1811.6 1047.6 C1812.6 1042 1810.4 1036 1807.8 1031 Z" fill="#fcfcfc"/>
  <g fill="none" stroke="#f7f7f7" stroke-width="1.1"><circle cx="1788.4" cy="1059.2" r="2.2"/><circle cx="1810.6" cy="1059.2" r="2.2"/><path d="M1790 1057.6 L1802 1046.4 M1809 1060.8 L1793 1075.6"/></g>
</svg>
<!--APP4-->

</div>
<!-- bottom strip -->
<div class="a" style="left:0;top:1077px;width:1920px;height:1px;background:#fcfcfc"></div>
<div class="a" style="left:0;top:1078px;width:1920px;height:2px;background:#2b2b2b"></div>
<div class="a" style="left:227px;top:1079px;width:73px;height:1px;background:#5a5a5a"></div>
<div class="a" style="left:1912px;top:1078px;width:2px;height:2px;background:#8a8a8a"></div>
</body>
</html>
